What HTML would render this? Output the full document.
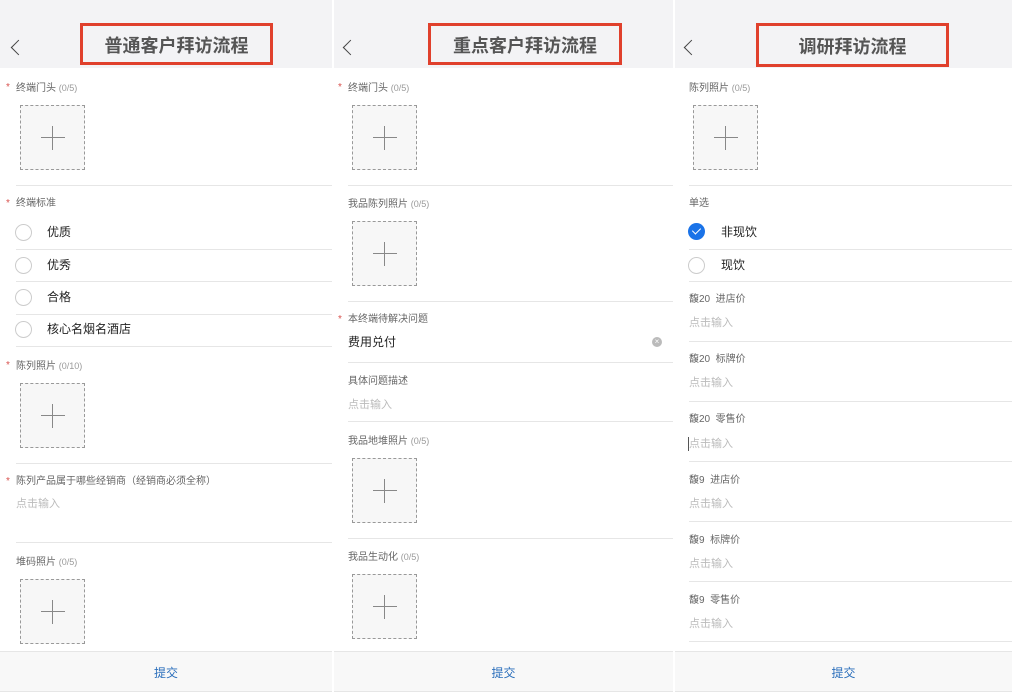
<!DOCTYPE html>
<html><head><meta charset="utf-8"><style>
*{margin:0;padding:0;box-sizing:border-box}
body{width:1012px;height:695px;position:relative;overflow:hidden;background:#fff;font-family:"Liberation Sans","Noto Sans CJK SC",sans-serif}
div,span{position:absolute;white-space:nowrap}
.hd{top:0;height:68px;background:#f3f3f5}
.bk{top:42px;width:11px;height:11px;border-left:1.6px solid #444;border-bottom:1.6px solid #444;transform:rotate(45deg)}
.rb{border:3px solid #e0402c;top:23px;height:42px;font-size:18px;font-weight:bold;color:#555;text-align:center;line-height:40px}
.l{font-size:10px;color:#666;line-height:14px}
.l i{font-style:normal;color:#999;font-size:9px}
.s{font-size:10px;color:#d9534f;line-height:14px}
.b{width:65px;height:65px;border:1.3px dashed #999;background:#f7f7f7}
.b::before{content:"";position:absolute;left:20px;top:31px;width:24px;height:1.4px;background:#888}
.b::after{content:"";position:absolute;left:31px;top:20px;width:1.4px;height:24px;background:#888}
.d{height:1px;background:#e6e6e6}
.r{width:17px;height:17px;border:1px solid #ccc;border-radius:50%}
.o{font-size:12px;color:#222;line-height:16px}
.p{font-size:11px;color:#bbb;line-height:14px}
.ft{top:651px;height:41px;background:#f8f8f8;border-top:1px solid #e6e6e6;border-bottom:1px solid #e6e6e6;text-align:center;line-height:43px;font-size:12px;color:#2a6ebb}
.sep{top:0;height:695px;width:2px;background:#fff}
</style></head><body>
<!-- panel 1 -->
<div class="hd" style="left:0;width:332px"></div>
<div class="bk" style="left:13px"></div>
<div class="rb" style="left:80px;width:193px">普通客户拜访流程</div>
<div class="s" style="left:6px;top:81px">*</div><div class="l" style="left:16px;top:81px">终端门头 <i>(0/5)</i></div>
<div class="b" style="left:20px;top:105px"></div>
<div class="d" style="left:16px;top:185px;width:316px"></div>
<div class="s" style="left:6px;top:197px">*</div><div class="l" style="left:16px;top:197px">终端标准</div>
<div class="r" style="left:15px;top:224px"></div><div class="o" style="left:47px;top:224px">优质</div>
<div class="d" style="left:16px;top:249px;width:316px"></div>
<div class="r" style="left:15px;top:257px"></div><div class="o" style="left:47px;top:257px">优秀</div>
<div class="d" style="left:16px;top:281px;width:316px"></div>
<div class="r" style="left:15px;top:289px"></div><div class="o" style="left:47px;top:289px">合格</div>
<div class="d" style="left:16px;top:314px;width:316px"></div>
<div class="r" style="left:15px;top:321px"></div><div class="o" style="left:47px;top:321px">核心名烟名酒店</div>
<div class="d" style="left:16px;top:346px;width:316px"></div>
<div class="s" style="left:6px;top:359px">*</div><div class="l" style="left:16px;top:359px">陈列照片 <i>(0/10)</i></div>
<div class="b" style="left:20px;top:383px"></div>
<div class="d" style="left:16px;top:463px;width:316px"></div>
<div class="s" style="left:6px;top:475px">*</div><div class="l" style="left:16px;top:475px">陈列产品属于哪些经销商（经销商必须全称）</div>
<div class="p" style="left:16px;top:497px">点击输入</div>
<div class="d" style="left:16px;top:542px;width:316px"></div>
<div class="l" style="left:16px;top:555px">堆码照片 <i>(0/5)</i></div>
<div class="b" style="left:20px;top:579px"></div>
<div class="ft" style="left:0;width:332px">提交</div>
<div class="sep" style="left:332px"></div>
<!-- panel 2 -->
<div class="hd" style="left:334px;width:339px"></div>
<div class="bk" style="left:345px"></div>
<div class="rb" style="left:428px;width:194px">重点客户拜访流程</div>
<div class="s" style="left:338px;top:81px">*</div><div class="l" style="left:348px;top:81px">终端门头 <i>(0/5)</i></div>
<div class="b" style="left:352px;top:105px"></div>
<div class="d" style="left:348px;top:185px;width:325px"></div>
<div class="l" style="left:348px;top:197px">我品陈列照片 <i>(0/5)</i></div>
<div class="b" style="left:352px;top:221px"></div>
<div class="d" style="left:348px;top:301px;width:325px"></div>
<div class="s" style="left:338px;top:313px">*</div><div class="l" style="left:348px;top:313px">本终端待解决问题</div>
<div class="o" style="left:348px;top:334px">费用兑付</div>
<div style="left:652px;top:337px;width:10px;height:10px;border-radius:50%;background:#bbb;color:#fff;font-size:8px;line-height:10px;text-align:center">×</div>
<div class="d" style="left:348px;top:362px;width:325px"></div>
<div class="l" style="left:348px;top:375px">具体问题描述</div>
<div class="p" style="left:348px;top:398px">点击输入</div>
<div class="d" style="left:348px;top:421px;width:325px"></div>
<div class="l" style="left:348px;top:434px">我品地堆照片 <i>(0/5)</i></div>
<div class="b" style="left:352px;top:458px"></div>
<div class="d" style="left:348px;top:538px;width:325px"></div>
<div class="l" style="left:348px;top:550px">我品生动化 <i>(0/5)</i></div>
<div class="b" style="left:352px;top:574px"></div>
<div class="ft" style="left:334px;width:339px">提交</div>
<div class="sep" style="left:673px"></div>
<!-- panel 3 -->
<div class="hd" style="left:675px;width:337px"></div>
<div class="bk" style="left:686px"></div>
<div class="rb" style="left:756px;width:193px;height:44px;line-height:42px">调研拜访流程</div>
<div class="l" style="left:689px;top:81px">陈列照片 <i>(0/5)</i></div>
<div class="b" style="left:693px;top:105px"></div>
<div class="d" style="left:689px;top:185px;width:323px"></div>
<div class="l" style="left:689px;top:197px">单选</div>
<div style="left:688px;top:223px;width:17px;height:17px;border-radius:50%;background:#1a73e8"></div>
<div style="left:694px;top:226px;width:5px;height:8px;border-right:1.5px solid #fff;border-bottom:1.5px solid #fff;transform:rotate(45deg)"></div>
<div class="o" style="left:721px;top:224px">非现饮</div>
<div class="d" style="left:689px;top:249px;width:323px"></div>
<div class="r" style="left:688px;top:257px"></div><div class="o" style="left:721px;top:257px">现饮</div>
<div class="d" style="left:689px;top:281px;width:323px"></div>
<div class="l" style="left:689px;top:293px">馥20&nbsp; 进店价</div><div class="p" style="left:689px;top:316px">点击输入</div>
<div class="d" style="left:689px;top:341px;width:323px"></div>
<div class="l" style="left:689px;top:353px">馥20&nbsp; 标牌价</div><div class="p" style="left:689px;top:376px">点击输入</div>
<div class="d" style="left:689px;top:401px;width:323px"></div>
<div class="l" style="left:689px;top:413px">馥20&nbsp; 零售价</div><div class="p" style="left:689px;top:437px">点击输入</div>
<div style="left:688px;top:437px;width:1px;height:14px;background:#555"></div>
<div class="d" style="left:689px;top:461px;width:323px"></div>
<div class="l" style="left:689px;top:474px">馥9&nbsp; 进店价</div><div class="p" style="left:689px;top:497px">点击输入</div>
<div class="d" style="left:689px;top:521px;width:323px"></div>
<div class="l" style="left:689px;top:534px">馥9&nbsp; 标牌价</div><div class="p" style="left:689px;top:557px">点击输入</div>
<div class="d" style="left:689px;top:581px;width:323px"></div>
<div class="l" style="left:689px;top:594px">馥9&nbsp; 零售价</div><div class="p" style="left:689px;top:617px">点击输入</div>
<div class="d" style="left:689px;top:641px;width:323px"></div>
<div class="ft" style="left:675px;width:337px">提交</div>
</body></html>
